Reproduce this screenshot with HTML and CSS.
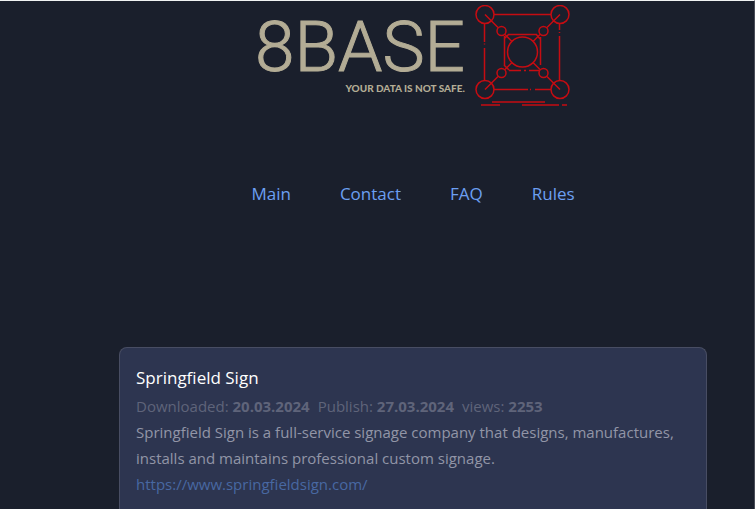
FILE: index.html
```
<!DOCTYPE html>
<html lang="en">
<head>
<meta charset="utf-8">
<title>8BASE</title>
<link rel="stylesheet" href="styles.css">
</head>
<body>
<div class="page">
  <header class="brand">
    <div class="brand-text">
      <div class="brand-name">8BASE</div>
      <div class="brand-tagline">YOUR DATA IS NOT SAFE.</div>
    </div>
    <svg class="brand-mark" viewBox="0 0 96 104" aria-hidden="true">
      <g fill="none" stroke="currentColor" stroke-width="1.5">
        <circle cx="10" cy="9.500" r="9"/><circle cx="85" cy="9.500" r="9"/>
        <circle cx="10" cy="84.500" r="9"/><circle cx="85" cy="84.500" r="9"/>
        <circle cx="26.500" cy="26" r="4.500"/><circle cx="68.500" cy="26" r="4.500"/>
        <circle cx="26.500" cy="68" r="4.500"/><circle cx="68.500" cy="68" r="4.500"/>
        <circle cx="47.500" cy="47" r="15"/>
        <path d="M19 9.500H76M9.500 18V37M9.500 38.500V39.500M9.500 43V76M84.500 18V25M84.500 27V28M84.500 31V76M19 84.500H53M55 84.500H56M60 84.500H76"/>
        <path d="M10 9.500L23 22.500M30 29.500L37 36.500M85 9.500L72 22.500M65 29.500L58 36.500M10 84.500L23 71.500M30 64.500L37 57.500M85 84.500L72 71.500M65 64.500L58 57.500"/>
        <path d="M34 29.500H61M29.500 31V61M65.500 32V60M34 65.500H46M49 65.500H51M54 65.500H64M34 29L29 34M61 29L65 34M29 60L34 65"/>
        <path d="M17 97H70M6 100H25M47 100H84M87 100H92"/>
      </g>
    </svg>
  </header>
  <nav class="menu" aria-label="Main menu">
    <a href="#main">Main</a>
    <a href="#contact">Contact</a>
    <a href="#faq">FAQ</a>
    <a href="#rules">Rules</a>
  </nav>
  <main>
    <article class="card">
      <h2>Springfield Sign</h2>
      <div class="meta">
        <span>Downloaded: <b>20.03.2024</b></span>
        <span>Publish: <b>27.03.2024</b></span>
        <span>views: <b>2253</b></span>
      </div>
      <p>Springfield Sign is a full-service signage company that designs, manufactures, installs and maintains professional custom signage.</p>
      <a href="#site">https://www.springfieldsign.com/</a>
    </article>
  </main>
</div>
</body>
</html>
```
FILE: styles.css
```
* { box-sizing: border-box; }
html { background: #1a1f2c; }
body {
  margin: 0;
  font: 15px/26px "Open Sans", "Noto Sans", sans-serif;
  color: #9295a7;
}
.page {
  display: flex;
  flex-direction: column;
  min-height: 100vh;
  padding: 4px 47px 0 119px;
  border-top: 1px solid #f0f3f3;
  border-right: 1px solid #494c57;
}
a { text-decoration: none; }
.brand {
  display: flex;
  justify-content: center;
  gap: 10px;
}
.brand-text {
  padding-top: 6px;
  text-align: right;
  color: #b3ac95;
}
.brand-name {
  font: 300 71px/72px Roboto, sans-serif;
  -webkit-text-stroke: 1px #b3ac95;
}
.brand-tagline {
  font: 900 10px/10px Lato, sans-serif;
}
.brand-mark {
  width: 96px;
  height: 104px;
  color: #c60c12;
}
.menu {
  display: flex;
  justify-content: center;
  gap: 49px;
  margin-top: 72px;
  font-size: 17px;
}
.menu a { color: #6c9ff2; }
main {
  display: flex;
  flex: 1;
  margin-top: 140px;
}
.card {
  flex: 1;
  padding: 17px 16px 8px;
  border: 1px solid #484d63;
  border-bottom: 0;
  border-radius: 8px 8px 0 0;
  background: #2d3550;
}
.card h2 {
  margin: 0 0 2px;
  font-size: 17px;
  line-height: 26px;
  font-weight: 400;
  color: #fff;
}
.meta {
  display: flex;
  gap: 8px;
  color: #5f647a;
}
.card p { margin: 0; }
.card a { color: #4868a2; }
```
